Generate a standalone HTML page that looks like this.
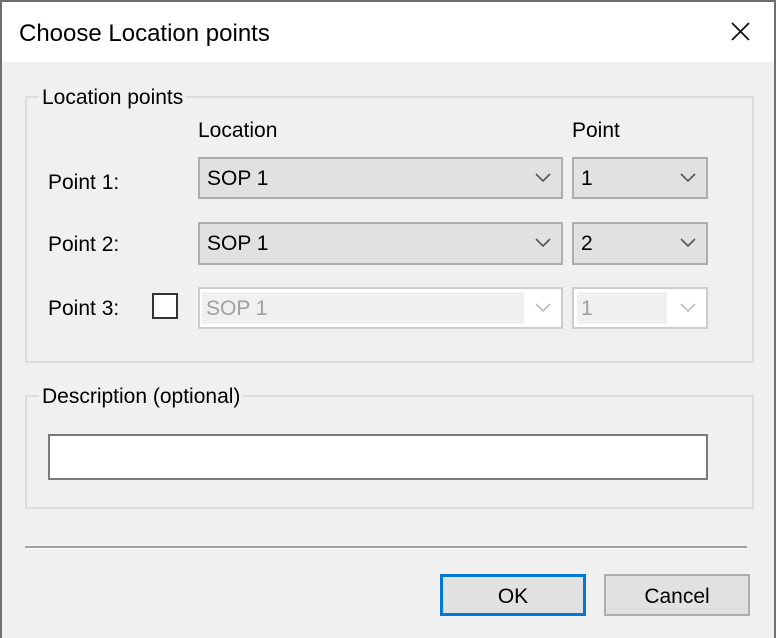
<!DOCTYPE html>
<html><head><meta charset="utf-8"><style>
*{box-sizing:border-box;margin:0;padding:0}
body{width:776px;height:638px;background:#f0f0f0;font-family:"Liberation Sans",sans-serif;font-size:21px;color:#000;position:relative;overflow:hidden}
.a{position:absolute}
.win{left:0;top:0;width:776px;height:638px;border:2px solid #6f6f6f;border-bottom:none}
.title{left:2px;top:2px;width:772px;height:60px;background:#fff}
.grp{border:2px solid #dcdcdc}
.lbl{background:#f0f0f0;padding:0 3px;line-height:22px}
.cb{background:#e1e1e1;border:2px solid #adadad;line-height:40px;padding-left:7px}
.cbd{background:#fff;border:2px solid #ccc;color:#a0a0a0;line-height:36px}
svg.arr{position:absolute;right:10px;top:14px}
.btn{background:#e1e1e1;border:2px solid #adadad;text-align:center;line-height:41px}
</style></head><body>
<div class="a win"></div>
<div class="a title"></div>
<div class="a" style="left:19px;top:20px;font-size:24px">Choose Location points</div>
<svg class="a" style="left:730px;top:21px" width="22" height="22"><path d="M2 2L19 19M19 2L2 19" stroke="#111" stroke-width="1.8"/></svg>

<div class="a grp" style="left:25px;top:96px;width:729px;height:267px"></div>
<div class="a lbl" style="left:39px;top:87px">Location points</div>
<div class="a" style="left:198px;top:119px">Location</div>
<div class="a" style="left:572px;top:119px">Point</div>

<div class="a" style="left:48px;top:171px">Point 1:</div>
<div class="a cb" style="left:198px;top:157px;width:365px;height:42px">SOP 1<svg class="arr" width="16" height="10"><path d="M1 1L8 8L15 1" stroke="#555" stroke-width="1.6" fill="none"/></svg></div>
<div class="a cb" style="left:572px;top:157px;width:136px;height:42px">1<svg class="arr" width="16" height="10"><path d="M1 1L8 8L15 1" stroke="#555" stroke-width="1.6" fill="none"/></svg></div>

<div class="a" style="left:48px;top:233px">Point 2:</div>
<div class="a cb" style="left:198px;top:222px;width:365px;height:43px">SOP 1<svg class="arr" width="16" height="10"><path d="M1 1L8 8L15 1" stroke="#555" stroke-width="1.6" fill="none"/></svg></div>
<div class="a cb" style="left:572px;top:222px;width:136px;height:43px">2<svg class="arr" width="16" height="10"><path d="M1 1L8 8L15 1" stroke="#555" stroke-width="1.6" fill="none"/></svg></div>

<div class="a" style="left:48px;top:297px">Point 3:</div>
<div class="a" style="left:152px;top:293px;width:26px;height:26px;border:2px solid #333;background:#fff"></div>
<div class="a cbd" style="left:198px;top:287px;width:365px;height:42px"><div class="a" style="left:2px;top:3px;width:322px;height:32px;background:#f0f0f0;line-height:34px;padding-left:4px">SOP 1</div><svg class="arr" width="16" height="10"><path d="M1 1L8 8L15 1" stroke="#bbb" stroke-width="1.6" fill="none"/></svg></div>
<div class="a cbd" style="left:572px;top:287px;width:136px;height:42px"><div class="a" style="left:3px;top:3px;width:90px;height:32px;background:#f0f0f0;line-height:34px;padding-left:4px">1</div><svg class="arr" width="16" height="10"><path d="M1 1L8 8L15 1" stroke="#bbb" stroke-width="1.6" fill="none"/></svg></div>

<div class="a grp" style="left:25px;top:395px;width:729px;height:114px"></div>
<div class="a lbl" style="left:39px;top:386px">Description (optional)</div>
<div class="a" style="left:48px;top:434px;width:660px;height:46px;border:2px solid #7a7a7a;background:#fff"></div>

<div class="a" style="left:25px;top:546px;width:722px;height:2px;background:#a0a0a0"></div>
<div class="a" style="left:25px;top:548px;width:722px;height:1px;background:#fff"></div>

<div class="a btn" style="left:440px;top:574px;width:146px;height:42px;border:3px solid #0078d7;line-height:39px">OK</div>
<div class="a btn" style="left:604px;top:574px;width:146px;height:42px">Cancel</div>
</body></html>
